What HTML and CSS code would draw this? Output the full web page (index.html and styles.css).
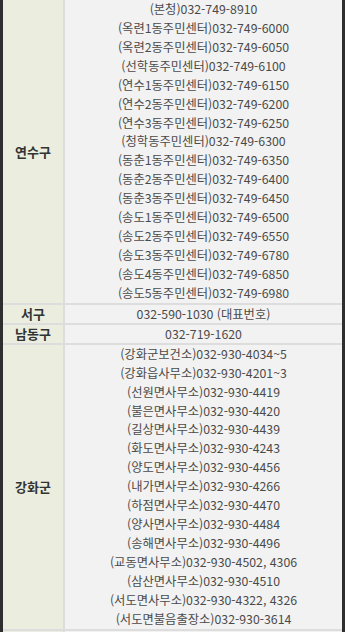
FILE: index.html
```html
<!DOCTYPE html>
<html lang="ko">
<head>
<meta charset="utf-8">
<link rel="stylesheet" href="styles.css">
</head>
<body>
<div class="frame">
  <div class="table">
    <div class="th">연수구</div>
    <div class="td">
      <div class="line">(본청)032-749-8910</div>
      <div class="line">(옥련1동주민센터)032-749-6000</div>
      <div class="line">(옥련2동주민센터)032-749-6050</div>
      <div class="line">(선학동주민센터)032-749-6100</div>
      <div class="line">(연수1동주민센터)032-749-6150</div>
      <div class="line">(연수2동주민센터)032-749-6200</div>
      <div class="line">(연수3동주민센터)032-749-6250</div>
      <div class="line">(청학동주민센터)032-749-6300</div>
      <div class="line">(동춘1동주민센터)032-749-6350</div>
      <div class="line">(동춘2동주민센터)032-749-6400</div>
      <div class="line">(동춘3동주민센터)032-749-6450</div>
      <div class="line">(송도1동주민센터)032-749-6500</div>
      <div class="line">(송도2동주민센터)032-749-6550</div>
      <div class="line">(송도3동주민센터)032-749-6780</div>
      <div class="line">(송도4동주민센터)032-749-6850</div>
      <div class="line">(송도5동주민센터)032-749-6980</div>
    </div>
    <div class="th single">서구</div>
    <div class="td single">032-590-1030 (대표번호)</div>
    <div class="th single">남동구</div>
    <div class="td single">032-719-1620</div>
    <div class="th">강화군</div>
    <div class="td">
      <div class="line">(강화군보건소)032-930-4034~5</div>
      <div class="line">(강화읍사무소)032-930-4201~3</div>
      <div class="line">(선원면사무소)032-930-4419</div>
      <div class="line">(불은면사무소)032-930-4420</div>
      <div class="line">(길상면사무소)032-930-4439</div>
      <div class="line">(화도면사무소)032-930-4243</div>
      <div class="line">(양도면사무소)032-930-4456</div>
      <div class="line">(내가면사무소)032-930-4266</div>
      <div class="line">(하점면사무소)032-930-4470</div>
      <div class="line">(양사면사무소)032-930-4484</div>
      <div class="line">(송해면사무소)032-930-4496</div>
      <div class="line">(교동면사무소)032-930-4502, 4306</div>
      <div class="line">(삼산면사무소)032-930-4510</div>
      <div class="line">(서도면사무소)032-930-4322, 4326</div>
      <div class="line">(서도면불음출장소)032-930-3614</div>
    </div>
    <div class="th single"></div>
    <div class="td single"></div>
  </div>
</div>
</body>
</html>
```
FILE: styles.css
```css
html, body {
  margin: 0;
  padding: 0;
  height: 632px;
  overflow: hidden;
  background: #2e2e2e;
}
.frame {
  margin: 0 3px;
  background: #dddddd;
}
.table {
  display: grid;
  grid-template-columns: 60px 277px;
  column-gap: 2px;
  row-gap: 2px;
  font-family: "Noto Sans CJK KR", "Noto Sans", sans-serif;
}
.th {
  background: #ebeedf;
  color: #333;
  font-size: 13px;
  font-weight: bold;
  display: flex;
  align-items: center;
  justify-content: center;
}
.td {
  background: #f2f2f2;
  color: #4a4a4a;
  font-size: 12.3px;
  text-align: center;
}
.line {
  height: 18.93px;
  line-height: 18.93px;
  white-space: nowrap;
}
.single {
  height: 18px;
  line-height: 18px;
}
.td.single {
  display: flex;
  align-items: center;
  justify-content: center;
}
```
